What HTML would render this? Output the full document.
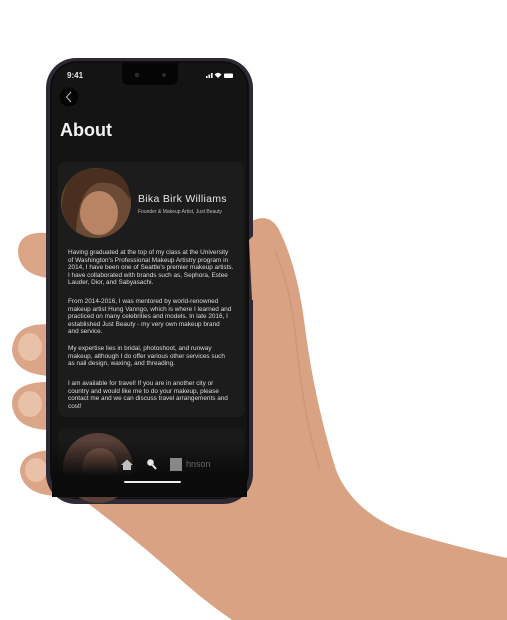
<!DOCTYPE html>
<html><head><meta charset="utf-8"><style>
html,body{margin:0;padding:0;background:#fff;}
body{width:507px;height:620px;position:relative;overflow:hidden;font-family:"Liberation Sans",sans-serif;}
svg{position:absolute;left:0;top:0;}
.t{position:absolute;color:#e6e6e6;white-space:nowrap;}
.p{position:absolute;left:68px;font-size:6.4px;line-height:7.6px;color:#dcdcdc;white-space:nowrap;}
</style></head><body>
<svg width="507" height="620" viewBox="0 0 507 620">
  <path d="M250 222 Q268 212 278 228 Q296 262 304 320 Q314 400 336 470 Q352 510 400 530 Q460 548 507 558 L507 620 L232 620 Q200 598 170 570 Q130 535 90 505 Q70 492 60 480 L60 440 L250 430 Z" fill="#d9a282"/>
  <path d="M270 240 Q290 280 296 340 Q304 420 320 470" stroke="#c48c6c" stroke-width="2" fill="none" opacity=".4"/>
  <path d="M55 234 Q20 228 18 250 Q18 274 48 278 L60 278 L60 234 Z" fill="#dba587"/>
  <path d="M56 325 Q14 320 12 350 Q14 374 50 376 L60 374 L60 325 Z" fill="#dba587"/>
  <path d="M56 382 Q12 380 12 404 Q14 430 52 430 L60 430 L60 382 Z" fill="#dba587"/>
  <path d="M56 450 Q20 450 20 472 Q24 496 60 496 L80 496 L60 450 Z" fill="#dba587"/>
  <ellipse cx="30" cy="347" rx="12" ry="14" fill="#e9c0a8"/>
  <ellipse cx="30" cy="404" rx="12" ry="13" fill="#e9c0a8"/>
  <ellipse cx="36" cy="470" rx="11" ry="12" fill="#e9c0a8"/>
  <rect x="46" y="58" width="207" height="446" rx="30" fill="#2e2935"/>
  <rect x="50" y="61" width="199" height="438" rx="27" fill="#0d0d0d"/>
  <rect x="52" y="63" width="195" height="434" rx="25" fill="#141414"/>
  <path d="M122 63 L178 63 L178 78 Q178 85 171 85 L129 85 Q122 85 122 78 Z" fill="#050505"/>
  <circle cx="137" cy="75" r="2.3" fill="#2a2a33"/>
  <circle cx="164" cy="75" r="2" fill="#2a2a33"/>
  <path d="M249 240 Q262 226 272 232 Q278 260 276 300 L252 300 Z" fill="#d9a282"/>
  <circle cx="69" cy="97" r="9.5" fill="#050505"/>
  <path d="M71 92 L66.5 97 L71 102" stroke="#bbb" stroke-width="1" fill="none"/>
  <rect x="206" y="76" width="1.6" height="2" fill="#fff"/><rect x="208.5" y="74.5" width="1.6" height="3.5" fill="#fff"/><rect x="211" y="73" width="1.6" height="5" fill="#fff"/>
  <path d="M214.5 74.5 Q218 71 221.5 74.5 L218 78 Z" fill="#fff"/>
  <rect x="224" y="73.5" width="9" height="4.5" rx="1" fill="#fff"/>
  <rect x="58" y="162" width="186" height="255" rx="7" fill="#1c1c1c"/>
  <circle cx="96" cy="203" r="35" fill="#6b4a36"/>
  <ellipse cx="99" cy="213" rx="19" ry="22" fill="#b98463"/>
  <path d="M62 205 Q64 168 98 168 Q130 170 130 200 Q120 180 98 183 Q78 190 76 232 Q62 222 62 205 Z" fill="#4a2f20"/>
  <defs><linearGradient id="g" x1="0" y1="0" x2="0" y2="1"><stop offset="0" stop-color="#0b0b0b" stop-opacity="0"/><stop offset="1" stop-color="#0b0b0b" stop-opacity="1"/></linearGradient></defs>
  <rect x="58" y="428" width="186" height="70" rx="7" fill="#1a1a1a"/>
  <circle cx="98" cy="468" r="35" fill="#5a4038"/>
  <ellipse cx="100" cy="468" rx="18" ry="20" fill="#8a6050"/>
  <rect x="52" y="440" width="195" height="36" fill="url(#g)"/>
  <rect x="52" y="476" width="195" height="21" fill="#0b0b0b"/>
  <path d="M121 465 L127 459.5 L133 465 L131 465 L131 470 L123 470 L123 465 Z" fill="#bfbfbf"/>
  <circle cx="150.5" cy="462.5" r="3.3" fill="#e6e6e6"/>
  <path d="M152.5 465 L156 469" stroke="#e6e6e6" stroke-width="2"/>
  <rect x="170" y="458" width="12" height="13" fill="#888"/>
  <rect x="124" y="481" width="57" height="2" rx="1" fill="#eee"/>
</svg>
<div class="t" style="left:67px;top:71px;font-size:8px;font-weight:bold;">9:41</div>
<div class="t" style="left:60px;top:120px;font-size:18px;font-weight:bold;color:#f2f2f2;">About</div>
<div class="t" style="left:138px;top:193px;font-size:10.5px;letter-spacing:.3px;">Bika Birk Williams</div>
<div class="t" style="left:138px;top:209px;font-size:5px;color:#bbb;">Founder &amp; Makeup Artist, Just Beauty</div>
<div class="p" style="top:249px;">Having graduated at the top of my class at the University<br>of Washington's Professional Makeup Artistry program in<br>2014, I have been one of Seattle's premier makeup artists.<br>I have collaborated with brands such as, Sephora, Estee<br>Lauder, Dior, and Sabyasachi.</div>
<div class="p" style="top:298px;">From 2014-2016, I was mentored by world-renowned<br>makeup artist Hung Vanngo, which is where I learned and<br>practiced on many celebrities and models. In late 2016, I<br>established Just Beauty - my very own makeup brand<br>and service.</div>
<div class="p" style="top:345px;">My expertise lies in bridal, photoshoot, and runway<br>makeup, although I do offer various other services such<br>as nail design, waxing, and threading.</div>
<div class="p" style="top:380px;">I am available for travel! If you are in another city or<br>country and would like me to do your makeup, please<br>contact me and we can discuss travel arrangements and<br>cost!</div>
<div class="t" style="left:186px;top:459px;font-size:9px;color:#666;">hnson</div>
</body></html>
